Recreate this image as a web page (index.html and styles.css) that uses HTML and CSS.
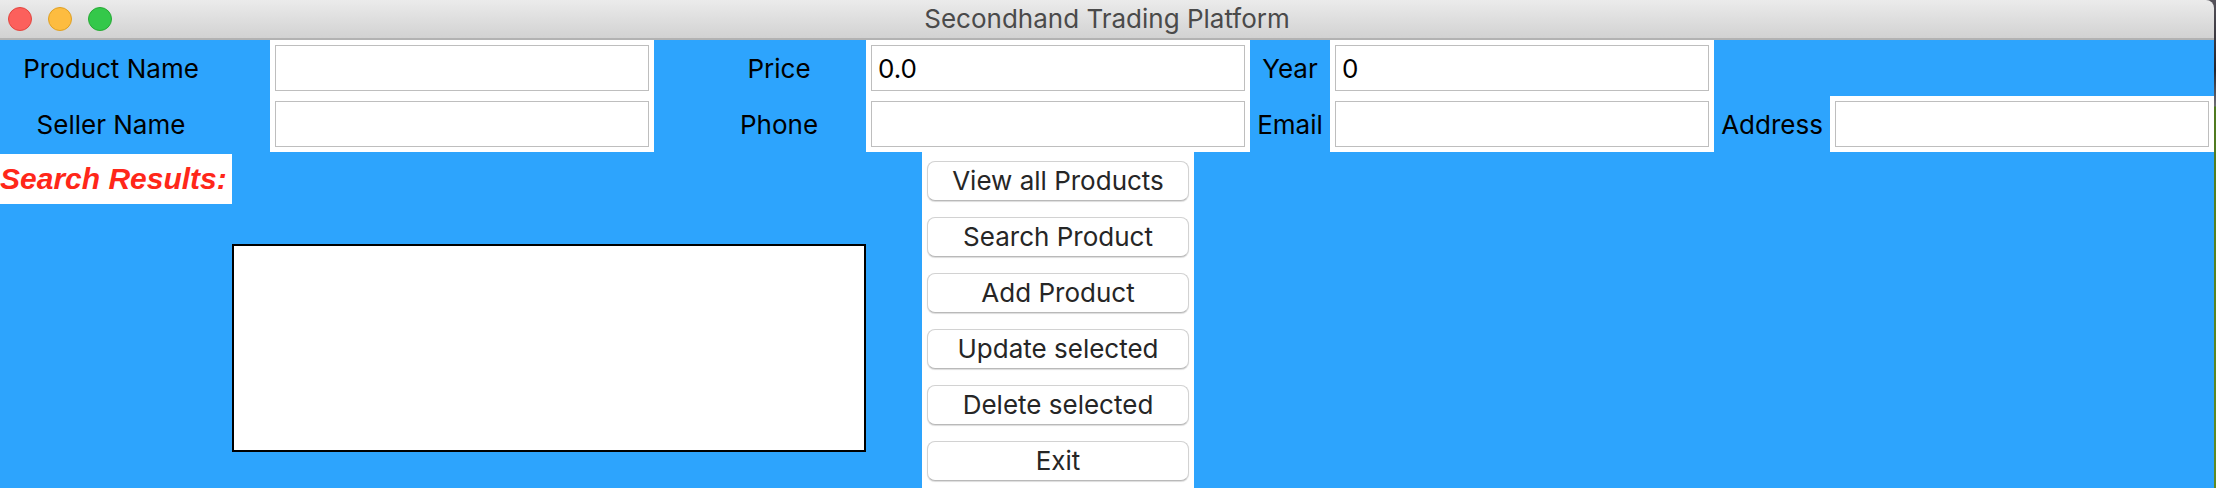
FILE: index.html
```html
<!DOCTYPE html>
<html lang="en">
<head>
<meta charset="utf-8">
<title>Secondhand Trading Platform</title>
<link rel="stylesheet" href="styles.css">
</head>
<body>
<div class="window">
  <header class="titlebar">
    <div class="controls">
      <button class="control close" type="button" aria-label="Close"></button>
      <button class="control minimize" type="button" aria-label="Minimize"></button>
      <button class="control maximize" type="button" aria-label="Zoom"></button>
    </div>
    <h1 class="title">Secondhand Trading Platform</h1>
  </header>
  <form class="content">
    <label class="label first" for="product">Product Name</label>
    <div class="field product"><input class="entry" id="product" type="text"></div>
    <label class="label price" for="price">Price</label>
    <div class="field"><input class="entry" id="price" type="text" value="0.0"></div>
    <label class="label" for="year">Year</label>
    <div class="field"><input class="entry" id="year" type="text" value="0"></div>

    <label class="label first" for="seller">Seller Name</label>
    <div class="field product"><input class="entry" id="seller" type="text"></div>
    <label class="label price" for="phone">Phone</label>
    <div class="field"><input class="entry" id="phone" type="text"></div>
    <label class="label" for="email">Email</label>
    <div class="field"><input class="entry" id="email" type="text"></div>
    <label class="label" for="address">Address</label>
    <div class="field"><input class="entry" id="address" type="text"></div>

    <label class="results-label" for="results">Search Results:</label>
    <select class="results" id="results" size="5"></select>
    <div class="actions">
      <button class="action" type="button">View all Products</button>
      <button class="action" type="button">Search Product</button>
      <button class="action" type="button">Add Product</button>
      <button class="action" type="button">Update selected</button>
      <button class="action" type="button">Delete selected</button>
      <button class="action" type="button">Exit</button>
    </div>
  </form>
</div>
</body>
</html>
```
FILE: styles.css
```css
* {
  box-sizing: border-box;
}

body {
  margin: 0;
  background: linear-gradient(#55525a 0, #24232a 70px, #6f6e76 106px, #4f7a20 107px, #5f8a25 100%);
  font-family: Inter, "Liberation Sans", sans-serif;
  font-size: 26px;
  line-height: 32px;
}

.window {
  display: flex;
  flex-direction: column;
  min-height: 100vh;
  margin-right: 2px;
}

.titlebar {
  display: grid;
  grid-template-columns: 1fr auto 1fr;
  align-items: center;
  height: 40px;
  padding: 0 8px;
  border-bottom: 2px solid #b2b2b2;
  border-top-right-radius: 8px;
  background: linear-gradient(#ebebeb, #d2d2d2);
}

.controls {
  display: flex;
  gap: 16px;
}

.control {
  width: 24px;
  height: 24px;
  padding: 0;
  border: 1px solid;
  border-radius: 50%;
}

.close {
  border-color: #e2463f;
  background: #fc605c;
}

.minimize {
  border-color: #dfa023;
  background: #fdbc40;
}

.maximize {
  border-color: #27aa35;
  background: #34c84a;
}

.title {
  margin: 0;
  color: #4a4a4a;
  font-size: 26px;
  font-weight: 400;
}

.content {
  display: grid;
  flex: 1;
  grid-template-columns: 232px 38px 1fr 38px 174px 1fr 80px 1fr 116px 1fr;
  grid-template-rows: 56px 56px auto 1fr;
  background: #2da4fd;
  color: #000;
}

.label {
  align-self: center;
  padding-top: 2px;
  text-align: center;
}

.first {
  grid-column: 1;
  padding-right: 10px;
}

.product {
  grid-column: 3;
}

.price {
  grid-column: 5;
}

.field {
  padding: 5px;
  background: #fff;
}

.entry {
  display: block;
  width: 100%;
  height: 46px;
  padding: 0 6px;
  border: 1px solid #bebebe;
  border-radius: 0;
  background: #fff;
  color: #000;
  font: inherit;
}

.results-label {
  grid-row: 3;
  grid-column: 1;
  margin: 2px 0 4px;
  background: #fff;
  color: #ff2719;
  font: italic bold 30px/50px "Liberation Sans", Arial, sans-serif;
  white-space: nowrap;
}

.results {
  grid-row: 4;
  grid-column: 2 / 6;
  align-self: center;
  width: 100%;
  height: 208px;
  border: 2px solid #000;
  border-radius: 0;
  background: #fff;
  font: inherit;
}

.actions {
  display: flex;
  flex-direction: column;
  grid-row: 3 / 5;
  grid-column: 6;
  justify-self: center;
  gap: 16px;
  padding: 9px 5px 7px;
  background: #fff;
}

.action {
  width: 262px;
  height: 40px;
  padding: 0;
  border: 1px solid #d2d2d2;
  border-bottom-color: #b9b9b9;
  border-radius: 8px;
  background: #fff;
  box-shadow: 0 1px 1px #dcdcdc;
  color: #262626;
  font: inherit;
}
```
